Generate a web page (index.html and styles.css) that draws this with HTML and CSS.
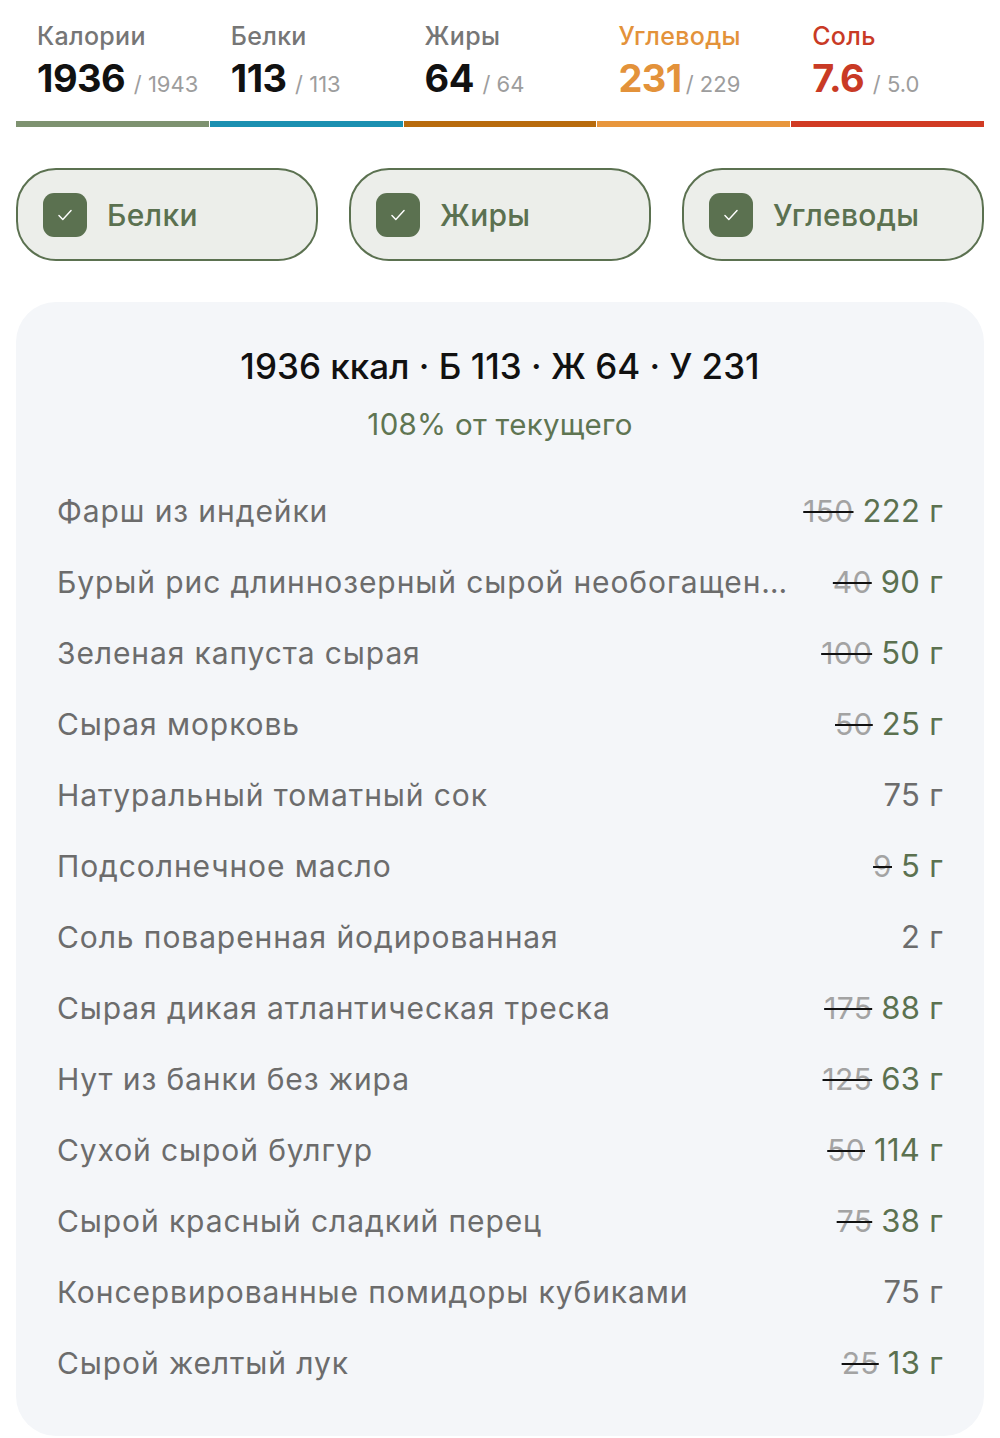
FILE: index.html
```html
<!DOCTYPE html>
<html lang="ru">
<head>
  <meta charset="UTF-8">
  <title>Рацион</title>
  <link rel="stylesheet" href="styles.css">
</head>
<body>

  <div class="stats">
    <div class="stat stat-kcal">
      <div class="stat-label">Калории</div>
      <div class="stat-value"><b>1936</b> <span class="stat-goal">/ 1943</span></div>
    </div>
    <div class="stat stat-prot">
      <div class="stat-label">Белки</div>
      <div class="stat-value"><b>113</b> <span class="stat-goal">/ 113</span></div>
    </div>
    <div class="stat stat-fat">
      <div class="stat-label">Жиры</div>
      <div class="stat-value"><b>64</b> <span class="stat-goal">/ 64</span></div>
    </div>
    <div class="stat stat-carb">
      <div class="stat-label">Углеводы</div>
      <div class="stat-value"><b>231</b><span class="stat-goal">/ 229</span></div>
    </div>
    <div class="stat stat-salt">
      <div class="stat-label">Соль</div>
      <div class="stat-value"><b>7.6</b> <span class="stat-goal">/ 5.0</span></div>
    </div>
  </div>

  <div class="toggles">
    <button class="toggle"><span class="check"><svg viewBox="0 0 20 20" width="22" height="22"><path d="M4.5 10.5l3.5 3.5 7.5-8" fill="none" stroke="#fff" stroke-width="1.3" stroke-linecap="round" stroke-linejoin="round"/></svg></span>Белки</button>
    <button class="toggle"><span class="check"><svg viewBox="0 0 20 20" width="22" height="22"><path d="M4.5 10.5l3.5 3.5 7.5-8" fill="none" stroke="#fff" stroke-width="1.3" stroke-linecap="round" stroke-linejoin="round"/></svg></span>Жиры</button>
    <button class="toggle"><span class="check"><svg viewBox="0 0 20 20" width="22" height="22"><path d="M4.5 10.5l3.5 3.5 7.5-8" fill="none" stroke="#fff" stroke-width="1.3" stroke-linecap="round" stroke-linejoin="round"/></svg></span>Углеводы</button>
  </div>

  <div class="card">
    <div class="card-title">1936 ккал · Б 113 · Ж 64 · У 231</div>
    <div class="card-sub">108% от текущего</div>

    <div class="items">
      <div class="item"><span class="name">Фарш из индейки</span><span class="amount"><s>150</s> <em>222 г</em></span></div>
      <div class="item"><span class="name">Бурый рис длиннозерный сырой необогащенный</span><span class="amount"><s>40</s> <em>90 г</em></span></div>
      <div class="item"><span class="name">Зеленая капуста сырая</span><span class="amount"><s>100</s> <em>50 г</em></span></div>
      <div class="item"><span class="name">Сырая морковь</span><span class="amount"><s>50</s> <em>25 г</em></span></div>
      <div class="item"><span class="name">Натуральный томатный сок</span><span class="amount">75 г</span></div>
      <div class="item"><span class="name">Подсолнечное масло</span><span class="amount"><s>9</s> <em>5 г</em></span></div>
      <div class="item"><span class="name">Соль поваренная йодированная</span><span class="amount">2 г</span></div>
      <div class="item"><span class="name">Сырая дикая атлантическая треска</span><span class="amount"><s>175</s> <em>88 г</em></span></div>
      <div class="item"><span class="name">Нут из банки без жира</span><span class="amount"><s>125</s> <em>63 г</em></span></div>
      <div class="item"><span class="name">Сухой сырой булгур</span><span class="amount"><s>50</s> <em>114 г</em></span></div>
      <div class="item"><span class="name">Сырой красный сладкий перец</span><span class="amount"><s>75</s> <em>38 г</em></span></div>
      <div class="item"><span class="name">Консервированные помидоры кубиками</span><span class="amount">75 г</span></div>
      <div class="item"><span class="name">Сырой желтый лук</span><span class="amount"><s>25</s> <em>13 г</em></span></div>
    </div>
  </div>

</body>
</html>
```

FILE: styles.css
```css
body {
  margin: 0;
  background: #fff;
  font-family: Inter, "Noto Sans", sans-serif;
  color: #111;
}

/* верхняя сводка */
.stats {
  display: flex;
  margin: 0 16px;
}
.stat {
  flex: 1;
  padding: 21px 0 13px 21px;
  border-bottom: 6px solid #7e9270;
}
.stat + .stat {
  margin-left: 1px;
}
.stat-label {
  font-size: 25px;
  line-height: 30px;
  font-weight: 500;
  color: #767676;
  letter-spacing: 0.3px;
}
.stat-value {
  margin-top: 5px;
  line-height: 44px;
  white-space: nowrap;
}
.stat-value b {
  font-size: 38px;
  font-weight: 700;
  color: #111;
  letter-spacing: -0.5px;
}
.stat-goal {
  font-size: 22px;
  color: #9d9d9d;
  margin-left: 4px;
}
.stat-prot { border-color: #1b90b1; }
.stat-fat { border-color: #b86b0d; }
.stat-carb { border-color: #e8963c; }
.stat-salt { border-color: #d13b23; }
.stat-carb .stat-label,
.stat-carb .stat-value b { color: #e3923a; }
.stat-salt .stat-label,
.stat-salt .stat-value b { color: #c93a25; }

/* переключатели */
.toggles {
  display: flex;
  gap: 31px;
  margin: 41px 16px 0;
}
.toggle {
  flex: 1;
  height: 93px;
  display: flex;
  align-items: center;
  gap: 20px;
  padding: 0 0 0 25px;
  background: #eceeea;
  border: 2px solid #5b7150;
  border-radius: 40px;
  font-family: inherit;
  font-size: 30px;
  font-weight: 500;
  color: #5b7150;
  letter-spacing: 0.3px;
}
.check {
  width: 44px;
  height: 44px;
  border-radius: 11px;
  background: #5b7150;
  display: flex;
  align-items: center;
  justify-content: center;
}

/* карточка рациона */
.card {
  margin: 41px 16px 0;
  padding: 42px 41px 38px;
  background: #f4f6f9;
  border-radius: 40px;
}
.card-title {
  text-align: center;
  font-size: 35px;
  line-height: 44px;
  font-weight: 500;
}
.card-sub {
  text-align: center;
  font-size: 29.5px;
  line-height: 36px;
  color: #5f7552;
  margin-top: 18px;
  letter-spacing: 0.3px;
}
.items {
  margin-top: 33px;
}
.item {
  height: 71px;
  display: flex;
  align-items: center;
  justify-content: space-between;
  gap: 44px;
}
.name {
  font-size: 30px;
  color: #6c6c6c;
  letter-spacing: 0.9px;
  white-space: nowrap;
  overflow: hidden;
  text-overflow: ellipsis;
}
.amount {
  font-size: 31px;
  color: #6c6c6c;
  letter-spacing: 0.3px;
  white-space: nowrap;
  flex-shrink: 0;
}
.amount s {
  font-size: 30px;
  color: #a3a3a3;
  text-decoration-color: #111;
  text-decoration-thickness: 2px;
}
.amount em {
  font-style: normal;
  color: #5b7150;
}
```
